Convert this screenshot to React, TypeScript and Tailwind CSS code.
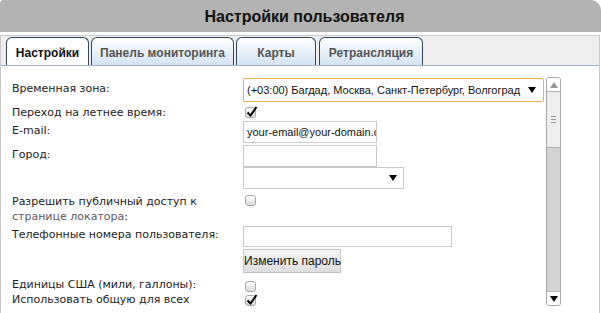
import React from "react"

const arial = { fontFamily: "'Liberation Sans', Arial, sans-serif" }

const Tick = ({ checked }: { checked?: boolean }) => (
    <span className="relative inline-block w-[11px] h-[11px] rounded-[3px] border border-[#a9a9a9] bg-linear-to-b from-white to-[#d9d9d9]">
        {checked &&
            <svg className="absolute left-[0px] top-[-3px]" width="12" height="13" viewBox="0 0 12 13">
                <path d="M1.5 7.5 L4.5 10.5 L10.5 2" stroke="#000" strokeWidth="2" fill="none" />
            </svg>
        }
    </span>
)

const Arrow = ({ up, color = "#000" }: { up?: boolean, color?: string }) => (
    <svg width="8" height="6" viewBox="0 0 8 6">
        <path d={up ? "M0 6 L4 0 L8 6 Z" : "M0 0 L8 0 L4 6 Z"} fill={color} />
    </svg>
)

const Row = ({ label, h, children }: { label?: React.ReactNode, h: string, children?: React.ReactNode }) => (
    <div className={`flex ${h}`}>
        <div className="w-[242px] pl-[11px] shrink-0">{label}</div>
        <div className="flex-1">{children}</div>
    </div>
)

const tabs = ["Панель мониторинга", "Карты", "Ретрансляция"]

export default function App() {
    return (
        <div className="w-[601px] h-[313px] overflow-hidden bg-white" style={{ fontFamily: "'DejaVu Sans', Verdana, sans-serif" }}>
            {/* header */}
            <div className="h-[32px] bg-[#b3b3b3] rounded-tl-[4px] rounded-tr-[10px] flex items-center justify-center pl-[8px] pt-[1px]">
                <span className="text-[16px] font-bold text-[#111]" style={arial}>Настройки пользователя</span>
            </div>

            <div className="mt-[3px] w-[600px] border border-[#c9c9c9]">
                {/* tabs */}
                <div className="h-[30px] bg-[#eeeeee] border-b border-[#9fb1c3] flex items-end pl-[5px] gap-[2px] text-[12px] font-bold" style={arial}>
                    <div className="w-[83px] h-[28px] bg-white border border-b-0 border-[#34465a] rounded-t-[6px] flex items-center justify-center pt-[2px] text-[#111]">Настройки</div>
                    {tabs.map((t, i) => (
                        <div
                            key={t}
                            className={`h-[28px] border border-b-0 border-[#34465a] rounded-t-[6px] flex items-center justify-center pt-[2px] text-[#555] bg-linear-to-b from-white to-[#d3e3f3] ${i === 0 ? "w-[143px]" : i === 1 ? "w-[80px]" : "w-[104px] ml-[1px]"}`}
                        >
                            {t}
                        </div>
                    ))}
                </div>

                {/* content */}
                <div className="flex h-[260px]">
                    <div className="w-[545px] pt-[12px] text-[11px] leading-[14px] text-[#222]">
                        <Row h="h-[26px]" label={<div className="pt-[4px]">Временная зона:</div>}>
                            <div className="w-[301px] h-[24px] border border-[#e6b252] rounded-[2px] flex items-center justify-between pl-[3px] pr-[7px] text-[11px] text-[#111] whitespace-nowrap" style={arial}>
                                <span>(+03:00) Багдад, Москва, Санкт-Петербург, Волгоград</span>
                                <Arrow />
                            </div>
                        </Row>
                        <Row h="h-[17px]" label={<div className="pt-[2px]">Переход на летнее время:</div>}>
                            <div className="pt-[3px] pl-[2px]"><Tick checked /></div>
                        </Row>
                        <Row h="h-[24px]" label={<div className="pt-[3px]">E-mail:</div>}>
                            <input
                                readOnly
                                defaultValue="your-email@your-domain.com"
                                className="w-[134px] h-[22px] border border-[#c8c8c8] pl-[3px] text-[11px] text-[#111] outline-none"
                                style={arial}
                            />
                        </Row>
                        <Row h="h-[22px]" label={<div className="pt-[3px]">Город:</div>}>
                            <div className="w-[134px] h-[22px] border border-[#c8c8c8]" />
                        </Row>
                        <Row h="h-[27px]">
                            <div className="w-[161px] h-[22px] border border-[#c8c8c8] flex items-center justify-end pr-[6px]">
                                <Arrow />
                            </div>
                        </Row>
                        <Row h="h-[29px]" label={<div className="leading-[15px]">Разрешить публичный доступ к<br /><span className="text-[#5e5866]">странице локатора</span>:</div>}>
                            <div className="pt-[1px] pl-[2px]"><Tick /></div>
                        </Row>
                        <Row h="h-[26px]" label={<div className="pt-[5px]">Телефонные номера пользователя:</div>}>
                            <div className="w-[209px] h-[21px] mt-[3px] border border-[#c8c8c8]" />
                        </Row>
                        <Row h="h-[29px]">
                            <button className="w-[98px] h-[24px] border border-[#c4c4c4] bg-linear-to-b from-[#f6f6f6] to-[#dedede] text-[12px] text-[#111] whitespace-nowrap" style={arial}>Изменить пароль</button>
                        </Row>
                        <Row h="h-[15px]" label="Единицы США (мили, галлоны):">
                            <div className="pt-[3px] pl-[2px]"><Tick /></div>
                        </Row>
                        <Row h="h-[20px]" label="Использовать общую для всех">
                            <div className="pt-[2px] pl-[2px]"><Tick checked /></div>
                        </Row>
                    </div>

                    {/* scrollbar */}
                    <div className="w-[15px] h-[229px] mt-[11px] flex flex-col border border-[#a5a5a5] rounded-[3px] overflow-hidden">
                        <div className="h-[14px] bg-white border-b border-[#b5b5b5] flex items-center justify-center"><Arrow up color="#9a9a9a" /></div>
                        <div className="h-[56px] bg-[#eeeeee] border-b border-[#b0b0b0] flex flex-col items-center justify-center gap-[2px]">
                            <span className="w-[5px] h-px bg-[#9a9a9a]" />
                            <span className="w-[5px] h-px bg-[#9a9a9a]" />
                            <span className="w-[5px] h-px bg-[#9a9a9a]" />
                        </div>
                        <div className="flex-1 bg-[#d4d4d4]" />
                        <div className="h-[14px] bg-white border-t border-[#b5b5b5] flex items-center justify-center"><Arrow /></div>
                    </div>
                </div>
            </div>
        </div>
    )
}
